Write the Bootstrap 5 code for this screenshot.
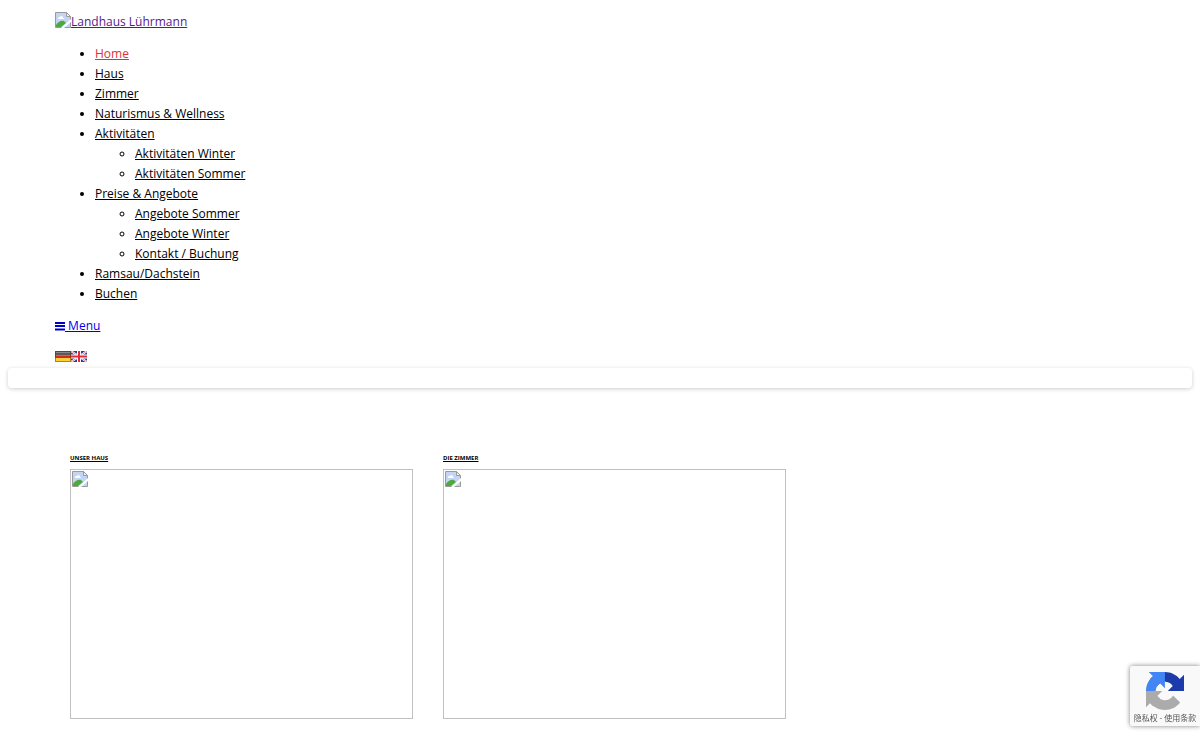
<!DOCTYPE html>
<html lang="de">
<head>
<meta charset="utf-8">
<meta name="viewport" content="width=device-width, initial-scale=1">
<title>Landhaus Lührmann</title>
<link href="https://cdn.jsdelivr.net/npm/bootstrap@5.3.0/dist/css/bootstrap.min.css" rel="stylesheet">
<style>
body { font: 12px/20px "Open Sans", sans-serif; color: #000; background: #fff; }
a { text-decoration: underline; color: #000; }
.site-header { padding: 12px 26px 0 55px; }
.brand { color: #551a8b; }
.brand svg { vertical-align: -2px; }
.site-nav ul { padding-left: 40px; margin: 0; }
.site-nav .active { color: #d33; }
.menu-toggle { color: #0000ee; }
.menu-toggle svg { vertical-align: -1px; }
.languages { padding: 15px 0 6px; }
.languages svg { display: block; }
.slider-frame { height: 20px; margin: 0 8px; border-radius: 4px; box-shadow: 0 1px 4px rgba(0,0,0,.2); }
.teasers { padding: 64px 26px 0 55px; }
.teasers .row { --bs-gutter-x: 30px; margin: 0; }
.teasers h2 { font-size: 6px; line-height: 12px; font-weight: 700; margin: 0 0 5px; text-transform: uppercase; }
.teaser-image { height: 250px; border: 1px solid #c0c0c0; padding: 1px; }
.teaser-image svg { display: block; }
.captcha { width: 70px; height: 60px; bottom: 14px; background: #f9f9f9; border-radius: 2px 0 0 2px; box-shadow: 0 0 5px gray; padding-top: 6px; }
.captcha small { font: 8px/12px "Noto Sans CJK SC", sans-serif; color: #555; white-space: nowrap; margin-top: 2px; }
.captcha small a { color: inherit; text-decoration: none; }
</style>
</head>
<body>
<svg class="d-none" xmlns="http://www.w3.org/2000/svg">
  <symbol id="missing" viewBox="0 0 16 16">
    <path d="M.5.5h11l4 4v11H.5z" fill="#c3d5f4" stroke="#9a9a9a"/>
    <path d="M3 7c0-2 1-2 2-2 1-2 3-1 3 1 1 0 1 1 1 1z" fill="#fff"/>
    <path d="M1 15v-2c2-3 5-5 8-4l2 2-5 4z" fill="#4fa83d"/>
    <path d="M11.500.5v4h4z" fill="#f4f4f4" stroke="#9a9a9a"/>
    <path d="M6 16 16 7v3l-7 6z" fill="#fff"/>
  </symbol>
</svg>
<header class="site-header">
  <a class="brand" href="#"><svg width="16" height="16" aria-hidden="true"><use href="#missing"/></svg>Landhaus Lührmann</a>
  <nav class="site-nav my-2 py-1">
    <ul>
      <li><a class="active" href="#">Home</a></li>
      <li><a href="#">Haus</a></li>
      <li><a href="#">Zimmer</a></li>
      <li><a href="#">Naturismus &amp; Wellness</a></li>
      <li><a href="#">Aktivitäten</a>
        <ul>
          <li><a href="#">Aktivitäten Winter</a></li>
          <li><a href="#">Aktivitäten Sommer</a></li>
        </ul>
      </li>
      <li><a href="#">Preise &amp; Angebote</a>
        <ul>
          <li><a href="#">Angebote Sommer</a></li>
          <li><a href="#">Angebote Winter</a></li>
          <li><a href="#">Kontakt / Buchung</a></li>
        </ul>
      </li>
      <li><a href="#">Ramsau/Dachstein</a></li>
      <li><a href="#">Buchen</a></li>
    </ul>
  </nav>
  <a class="menu-toggle" href="#"><svg width="10" height="10" viewBox="0 0 10 10" aria-hidden="true"><path d="M0 1h10v2H0zM0 4h10v2H0zM0 7.500h10v2H0z" fill="#00c"/></svg> Menu</a>
  <div class="languages d-flex align-items-center">
    <a href="#" aria-label="Deutsch"><svg width="16" height="11" viewBox="0 0 16 11"><path fill="#5a5a5a" d="M0 0h16v4H0z"/><path fill="#d9281f" d="M0 4h16v4H0z"/><path fill="#f8d03a" d="M0 7h16v4H0z"/><path d="M1 1h14v1H1z" fill="#888"/><path d="M1 4h14v1H1z" fill="#ec5a4c"/><path d="M.5.5h15v10H.5z" fill="none" stroke="#6b2c14" stroke-opacity=".5"/></svg></a>
    <a href="#" aria-label="English"><svg width="16" height="11" viewBox="0 0 16 11"><path fill="#2b3c8c" d="M0 0h16v11H0z"/><path d="m0 0 16 11M16 0 0 11" stroke="#fff" stroke-width="2"/><path d="m0 0 16 11M16 0 0 11" stroke="#d9536a" stroke-width=".7"/><path d="M8 0v11M0 5.500h16" stroke="#fff" stroke-width="4"/><path d="M8 0v11M0 5.500h16" stroke="#e02c38" stroke-width="2"/></svg></a>
  </div>
</header>
<div class="slider-frame"></div>
<main class="teasers">
  <div class="row">
    <section class="col-4">
      <h2><a href="#">Unser Haus</a></h2>
      <div class="teaser-image"><svg width="16" height="16" aria-hidden="true"><use href="#missing"/></svg></div>
    </section>
    <section class="col-4">
      <h2><a href="#">Die Zimmer</a></h2>
      <div class="teaser-image"><svg width="16" height="16" aria-hidden="true"><use href="#missing"/></svg></div>
    </section>
  </div>
</main>
<aside class="captcha position-fixed end-0 d-flex flex-column align-items-center">
  <svg width="38" height="38" viewBox="0 0 64 64" aria-hidden="true">
    <path fill="#1c3aa9" d="M64 31.955l-.033-1.370V4.687l-7.160 7.160C50.948 4.674 42.033.093 32.050.093c-10.400 0-19.622 4.960-25.458 12.640l11.736 11.860a15.550 15.550 0 0 1 4.754-5.334c2.050-1.600 4.952-2.906 8.968-2.906.485 0 .860.057 1.135.163 4.976.393 9.288 3.140 11.828 7.124l-8.307 8.307L64 31.953"/>
    <path fill="#4285f4" d="M31.862.094l-1.370.033H4.594l7.160 7.160C4.580 13.147 0 22.060 0 32.046c0 10.400 4.960 19.622 12.640 25.458L24.500 45.768a15.550 15.550 0 0 1-5.334-4.754c-1.600-2.050-2.906-4.952-2.906-8.968 0-.485.057-.860.163-1.135.393-4.976 3.140-9.288 7.124-11.828l8.307 8.307L31.860.095"/>
    <path fill="#ababab" d="M.001 32.045l.033 1.370v25.898l7.160-7.160c5.860 7.173 14.774 11.754 24.760 11.754 10.400 0 19.622-4.960 25.458-12.640l-11.736-11.860a15.550 15.550 0 0 1-4.754 5.334c-2.050 1.600-4.952 2.906-8.968 2.906-.485 0-.860-.057-1.135-.163-4.976-.393-9.288-3.140-11.828-7.124l8.307-8.307c-10.522.040-22.400.066-27.295-.005"/>
  </svg>
  <small><a href="#">隐私权</a> - <a href="#">使用条款</a></small>
</aside>
<script src="https://cdn.jsdelivr.net/npm/bootstrap@5.3.0/dist/js/bootstrap.bundle.min.js"></script>
</body>
</html>
